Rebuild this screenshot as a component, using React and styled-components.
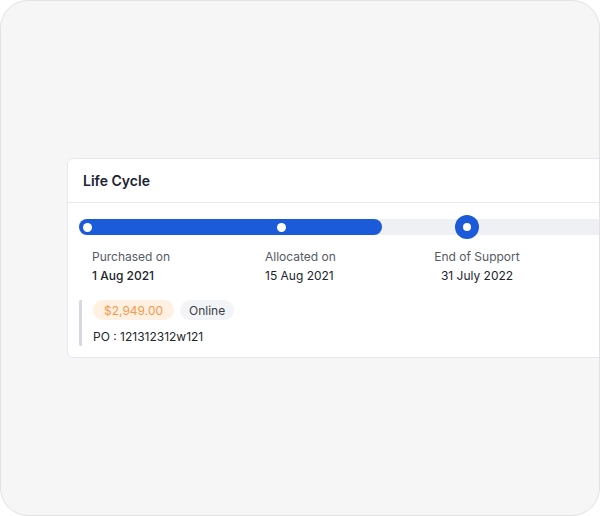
import React from "react";
import styled, { createGlobalStyle } from "styled-components";

const Global = createGlobalStyle`
  html, body { margin: 0; padding: 0; }
  body { font-family: Inter, "Noto Sans", sans-serif; background: #ffffff; }
  * { box-sizing: border-box; }
`;

const Frame = styled.div`
  width: 600px;
  height: 516px;
  background: #f6f6f6;
  border: 1px solid #e2e2e2;
  border-radius: 28px;
  overflow: hidden;
  padding: 157px 0 0 66px;
  display: flex;
  align-items: flex-start;
`;

const Card = styled.div`
  width: 620px;
  flex-shrink: 0;
  background: #ffffff;
  border: 1px solid #e6e7ee;
  border-radius: 6px;
`;

const Header = styled.div`
  height: 44px;
  display: flex;
  align-items: center;
  padding-left: 15px;
  border-bottom: 1px solid #e9eaf0;
  font-size: 14px;
  font-weight: 600;
  color: #1d2331;
`;

const Body = styled.div`
  padding: 16px 0 11px 11px;
`;

const Track = styled.div`
  position: relative;
  height: 16px;
  border-radius: 8px;
  background: #eef0f3;
`;

const Fill = styled.div`
  height: 100%;
  border-radius: 8px;
  background: #1b5ad8;
`;

const Dot = styled.span`
  position: absolute;
  top: 50%;
  width: 9px;
  height: 9px;
  margin: -4.5px 0 0 -4.5px;
  border-radius: 50%;
  background: #ffffff;
`;

const Current = styled.span`
  position: absolute;
  top: 50%;
  width: 24px;
  height: 24px;
  margin: -12px 0 0 -12px;
  border-radius: 50%;
  background: #1b5ad8;
  display: flex;
  align-items: center;
  justify-content: center;
  &::after {
    content: "";
    width: 8px;
    height: 8px;
    border-radius: 50%;
    background: #ffffff;
  }
`;

const Steps = styled.div`
  display: grid;
  grid-template-columns: 173px 169px 86px;
  padding: 14px 0 0 13px;
`;

const Step = styled.div`
  display: flex;
  flex-direction: column;
  gap: 4px;
  align-items: ${(p) => (p.$center ? "center" : "flex-start")};
  white-space: nowrap;
`;

const Label = styled.span`
  font-size: 12px;
  line-height: 15px;
  color: #555a64;
`;

const Value = styled.span`
  font-size: 12px;
  line-height: 15px;
  color: #20242c;
  font-weight: ${(p) => (p.$strong ? 500 : 400)};
`;

const Meta = styled.div`
  margin-top: 17px;
  border-left: 3px solid #d6d7e1;
  border-radius: 2px;
  padding: 0 0 0 11px;
  display: flex;
  flex-direction: column;
  gap: 9px;
`;

const Badges = styled.div`
  display: flex;
  gap: 6px;
`;

const Badge = styled.span`
  height: 20px;
  padding: 0 ${(p) => (p.$tone === "orange" ? "11px" : "9px")};
  border-radius: 10px;
  display: inline-flex;
  align-items: center;
  font-size: 12px;
  background: ${(p) => (p.$tone === "orange" ? "#fff0e2" : "#f3f4f7")};
  color: ${(p) => (p.$tone === "orange" ? "#f39a4c" : "#3a3d45")};
`;

const Po = styled.span`
  font-size: 12px;
  line-height: 16px;
  color: #23262d;
  padding-bottom: 1px;
`;

const steps = [
  { label: "Purchased on", value: "1 Aug 2021", strong: true },
  { label: "Allocated on", value: "15 Aug 2021" },
  { label: "End of Support", value: "31 July 2022", center: true },
];

export default function App() {
  return (
    <>
      <Global />
      <Frame>
        <Card>
          <Header>Life Cycle</Header>
          <Body>
            <Track>
              <Fill style={{ width: 303 }} />
              <Dot style={{ left: 8 }} />
              <Dot style={{ left: 202 }} />
              <Current style={{ left: 388 }} />
            </Track>
            <Steps>
              {steps.map((s) => (
                <Step key={s.label} $center={s.center}>
                  <Label>{s.label}</Label>
                  <Value $strong={s.strong}>{s.value}</Value>
                </Step>
              ))}
            </Steps>
            <Meta>
              <Badges>
                <Badge $tone="orange">$2,949.00</Badge>
                <Badge>Online</Badge>
              </Badges>
              <Po>PO : 121312312w121</Po>
            </Meta>
          </Body>
        </Card>
      </Frame>
    </>
  );
}
